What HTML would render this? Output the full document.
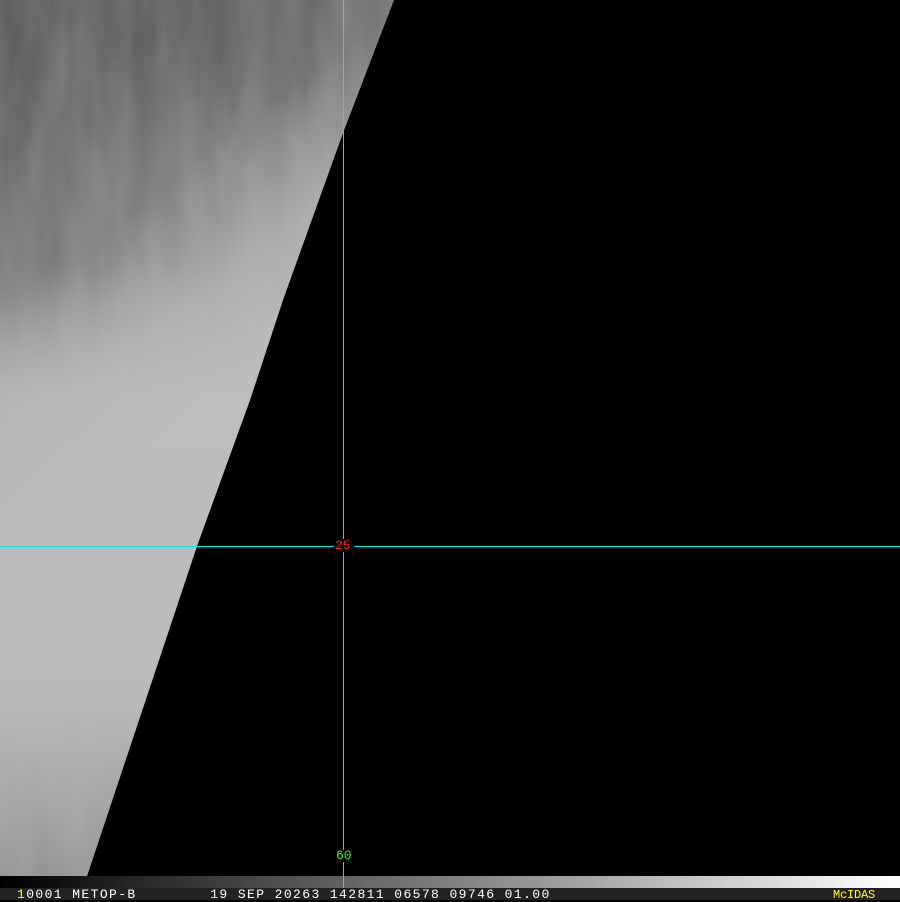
<!DOCTYPE html>
<html><head><style>
html,body{margin:0;padding:0;background:#000;width:900px;height:900px;overflow:hidden}
.t{position:absolute;font-family:"Liberation Mono",monospace;font-size:13px;line-height:12px}
</style></head><body>
<svg width="900" height="900" style="position:absolute;left:0;top:0">
<defs>
<clipPath id="sw"><path d="M0 0 L394 0 L343 133 L283 300 L250 400 L197 546 L87 876 L0 876 Z"/></clipPath>
<linearGradient id="g1" gradientUnits="userSpaceOnUse" x1="60" y1="100" x2="260" y2="360">
<stop offset="0" stop-color="#555"/><stop offset="0.4" stop-color="#6a6a6a"/><stop offset="0.75" stop-color="#aaa"/><stop offset="1" stop-color="#bdbdbd"/></linearGradient>
<linearGradient id="g2" x1="0" y1="0" x2="0" y2="1">
<stop offset="0" stop-color="#bbb" stop-opacity="0"/><stop offset="0.3" stop-color="#b0b0b0" stop-opacity="0.2"/><stop offset="0.45" stop-color="#bdbdbd" stop-opacity="0.8"/><stop offset="0.8" stop-color="#bababa" stop-opacity="0.9"/><stop offset="1" stop-color="#8a8a8a" stop-opacity="0.9"/></linearGradient>
<filter id="n"><feTurbulence type="fractalNoise" baseFrequency="0.03 0.008" numOctaves="3" seed="4"/><feColorMatrix type="matrix" values="0 0 0 0 0.5 0 0 0 0 0.5 0 0 0 0 0.5 0 0 0 0.4 0"/></filter>
<linearGradient id="bar" x1="0" x2="1"><stop offset="0" stop-color="#000"/><stop offset="1" stop-color="#fff"/></linearGradient>
</defs>
<g clip-path="url(#sw)">
<rect width="900" height="876" fill="url(#g1)"/>
<rect width="900" height="876" fill="url(#g2)"/>
<rect width="900" height="876" filter="url(#n)"/>
</g>
<rect x="0" y="876" width="900" height="12" fill="url(#bar)"/>
<rect x="0" y="888" width="900" height="12" fill="#222"/>
<line x1="343.5" y1="0" x2="343.5" y2="888" stroke="#00e5ee" stroke-width="1"/>
<line x1="0" y1="546.5" x2="900" y2="546.5" stroke="#00e5ee" stroke-width="1"/>
<rect x="334" y="539" width="20" height="13" fill="#000"/>
</svg>
<div class="t" style="left:335px;top:540px;color:#ff2020">25</div>
<div class="t" style="left:336px;top:850px;color:#20ff20;background:#000">60</div>
<div class="t" style="left:17px;top:889px;color:#fff;white-space:pre;letter-spacing:1.4px"><span style="color:#ff0">1</span>0001 METOP-B        19 SEP 20263 142811 06578 09746 01.00</div>
<div class="t" style="left:833px;top:889px;color:#ff0;font-size:12px;letter-spacing:-0.2px">McIDAS</div>
</body></html>
